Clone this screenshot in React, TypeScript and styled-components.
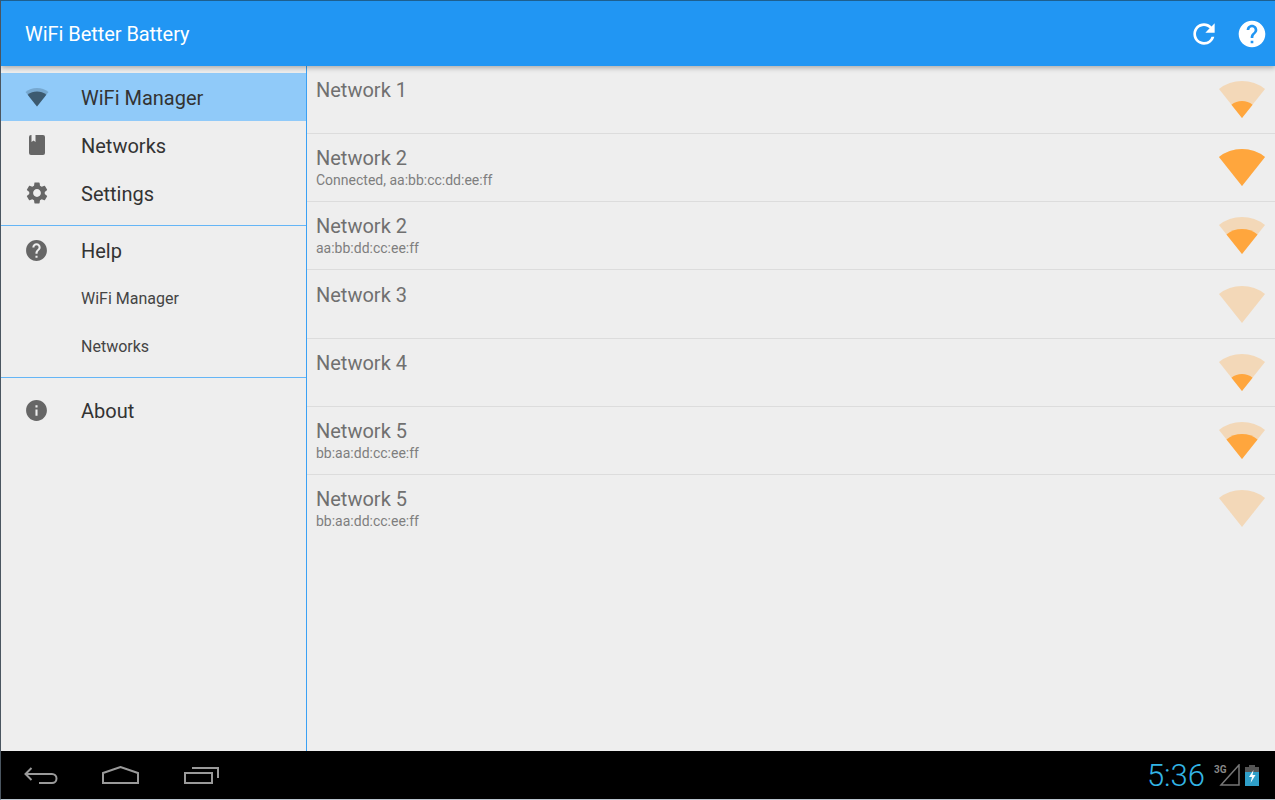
/**
 * WiFi Better Battery: tablet screen with drawer and network list
 */

import * as React from "react"
import styled, { createGlobalStyle } from "styled-components"
import { MdHelp, MdInfo, MdRefresh, MdSettings } from "react-icons/md"

const GlobalStyle = createGlobalStyle`
    html, body {
        margin: 0;
        padding: 0;
        background: #000;
    }
`

const Screen = styled.div`
    width: 1275px;
    height: 800px;
    display: flex;
    flex-direction: column;
    overflow: hidden;
    box-sizing: border-box;
    border-top: 1px solid #1d5f8f;
    border-left: 1px solid #4a5560;
    border-bottom: 1px solid #bcc6d0;
    font-family: Roboto, "Liberation Sans", sans-serif;
`

const AppBar = styled.header`
    height: 65px;
    flex: none;
    display: flex;
    align-items: center;
    justify-content: space-between;
    padding: 0 3px 0 24px;
    background: #2196f3;
    color: #fff;
    position: relative;
    z-index: 1;
    box-shadow: 0 2px 5px rgba(0, 0, 0, 0.28);
`

const AppTitle = styled.div`
    font-size: 20px;
    font-weight: 400;
    letter-spacing: -0.05px;
    padding-top: 1px;
`

const AppActions = styled.div`
    display: flex;
    align-items: center;
    gap: 8px;
`

const ActionIcon = styled.span`
    display: flex;
    width: 40px;
    height: 40px;
    align-items: center;
    justify-content: center;
`

const Body = styled.div`
    flex: 1;
    min-height: 0;
    display: flex;
    background: #eeeeee;
`

const Drawer = styled.nav`
    width: 305px;
    flex: none;
    border-right: 1px solid #3aa0f4;
    padding-top: 7px;
    color: #333;
`

const DrawerGroup = styled.div<{ $top?: number; $bottom?: number; $divider?: boolean }>`
    padding-top: ${(p) => p.$top ?? 0}px;
    padding-bottom: ${(p) => p.$bottom ?? 0}px;
    border-top: ${(p) => (p.$divider ? "1px solid #64b5f6" : "0")};
`

const DrawerItem = styled.div<{ $active?: boolean }>`
    height: 48px;
    display: flex;
    align-items: center;
    background: ${(p) => (p.$active ? "#90caf9" : "transparent")};
`

const DrawerLabel = styled.span`
    font-size: 20px;
    padding-top: 2px;
`

const DrawerSubLabel = styled.span`
    font-size: 16px;
    padding-left: 80px;
    color: #444;
`

const DrawerIcon = styled.span`
    width: 80px;
    flex: none;
    display: flex;
    justify-content: center;
    padding-right: 9px;
    box-sizing: border-box;
    color: #666;
`

const NetworkList = styled.main`
    flex: 1;
    min-width: 0;
`

const NetworkRow = styled.div`
    height: 68.15px;
    box-sizing: border-box;
    display: flex;
    justify-content: space-between;
    padding: 12.15px 9px 0 9px;
    border-bottom: 1px solid #dcdcdc;
    &:last-child {
        border-bottom: 0;
    }
`

const NetworkText = styled.div`
    display: flex;
    flex-direction: column;
    color: #707070;
`

const NetworkName = styled.div`
    font-size: 20px;
    line-height: 25px;
`

const NetworkDetail = styled.div`
    font-size: 14px;
    line-height: 18px;
    color: #7e7e7e;
`

const SignalSlot = styled.div`
    padding-top: 3px;
`

const NavBar = styled.footer`
    height: 48px;
    flex: none;
    display: flex;
    align-items: center;
    justify-content: space-between;
    padding: 0 16px 0 23px;
    background: #000;
`

const NavButtons = styled.div`
    display: flex;
    align-items: center;
    gap: 44px;
`

const Tray = styled.div`
    display: flex;
    align-items: center;
`

const Clock = styled.div`
    font-size: 31px;
    font-weight: 300;
    color: #33b5e5;
    margin-right: 9px;
`

const SignalTray = styled.div`
    position: relative;
    width: 26px;
    height: 22px;
    margin-right: 5px;
`

const ThreeG = styled.span`
    position: absolute;
    left: 0;
    top: 1px;
    font-size: 10px;
    line-height: 10px;
    font-weight: 700;
    color: #888;
`

/** Fan shaped signal meter, the filled part grows out of the tip */
function SignalFan(props: { size: number; level: number; color: string; faint: number }) {
    const sector = (r: number) => {
        const dx = r * 0.622
        const dy = r * 0.783
        return `M24 37 L${24 - dx} ${37 - dy} A${r} ${r} 0 0 1 ${24 + dx} ${37 - dy} Z`
    }
    return (
        <svg width={props.size} height={(props.size * 38) / 48} viewBox="0 0 48 38">
            <path d={sector(37)} fill={props.color} opacity={props.faint} />
            {props.level > 0 && <path d={sector(props.level)} fill={props.color} />}
        </svg>
    )
}

function BookIcon() {
    return (
        <svg width="16" height="20" viewBox="0 0 16 20">
            <path
                fill="currentColor"
                fillRule="evenodd"
                d="M2 0H14a2 2 0 0 1 2 2V18a2 2 0 0 1-2 2H2a2 2 0 0 1-2-2V2a2 2 0 0 1 2-2ZM2.5 0V7L4.5 5.5L6.5 7V0Z"
            />
        </svg>
    )
}

function BackIcon() {
    return (
        <svg width="34" height="18" viewBox="0 0 34 18" fill="none" stroke="#9a9a9a" strokeWidth="2">
            <path d="M7.5 2L1.5 8L7.5 14" />
            <path d="M1.5 8H28A4.5 4.5 0 0 1 28 17H15" />
        </svg>
    )
}

function HomeIcon() {
    return (
        <svg width="38" height="18" viewBox="0 0 38 18" fill="none" stroke="#9a9a9a" strokeWidth="2">
            <path d="M1 17V7L18.5 1L36 7V17Z" />
        </svg>
    )
}

function RecentsIcon() {
    return (
        <svg width="35" height="17" viewBox="0 0 35 17" fill="none" stroke="#9a9a9a" strokeWidth="2">
            <path d="M1 6H28V16H1Z" />
            <path d="M8 1H34V11" />
        </svg>
    )
}

function BatteryIcon() {
    return (
        <svg width="14" height="21" viewBox="0 0 14 21">
            <path d="M4 0H10V2H14V21H0V2H4Z" fill="#555" />
            <path d="M0 7H14V21H0Z" fill="#2f9fc9" />
            <path d="M8.5 5L4 12H7L5.5 18L10.5 10H7.5Z" fill="#fff" />
        </svg>
    )
}

const networks = [
    { name: "Network 1", level: 17 },
    { name: "Network 2", detail: "Connected, aa:bb:cc:dd:ee:ff", level: 37 },
    { name: "Network 2", detail: "aa:bb:dd:cc:ee:ff", level: 25 },
    { name: "Network 3", level: 0 },
    { name: "Network 4", level: 17 },
    { name: "Network 5", detail: "bb:aa:dd:cc:ee:ff", level: 25 },
    { name: "Network 5", detail: "bb:aa:dd:cc:ee:ff", level: 0 },
]

export default function App() {
    return (
        <Screen>
            <GlobalStyle />
            <AppBar>
                <AppTitle>WiFi Better Battery</AppTitle>
                <AppActions>
                    <ActionIcon>
                        <MdRefresh size={32} />
                    </ActionIcon>
                    <ActionIcon>
                        <MdHelp size={32} />
                    </ActionIcon>
                </AppActions>
            </AppBar>
            <Body>
                <Drawer>
                    <DrawerGroup $bottom={8}>
                        <DrawerItem $active>
                            <DrawerIcon>
                                <SignalFan size={24} level={30} color="#3c5a70" faint={0.3} />
                            </DrawerIcon>
                            <DrawerLabel>WiFi Manager</DrawerLabel>
                        </DrawerItem>
                        <DrawerItem>
                            <DrawerIcon>
                                <BookIcon />
                            </DrawerIcon>
                            <DrawerLabel>Networks</DrawerLabel>
                        </DrawerItem>
                        <DrawerItem>
                            <DrawerIcon>
                                <MdSettings size={26} />
                            </DrawerIcon>
                            <DrawerLabel>Settings</DrawerLabel>
                        </DrawerItem>
                    </DrawerGroup>
                    <DrawerGroup $divider $bottom={7}>
                        <DrawerItem>
                            <DrawerIcon>
                                <MdHelp size={25} />
                            </DrawerIcon>
                            <DrawerLabel>Help</DrawerLabel>
                        </DrawerItem>
                        <DrawerItem>
                            <DrawerSubLabel>WiFi Manager</DrawerSubLabel>
                        </DrawerItem>
                        <DrawerItem>
                            <DrawerSubLabel>Networks</DrawerSubLabel>
                        </DrawerItem>
                    </DrawerGroup>
                    <DrawerGroup $divider $top={8}>
                        <DrawerItem>
                            <DrawerIcon>
                                <MdInfo size={25} />
                            </DrawerIcon>
                            <DrawerLabel>About</DrawerLabel>
                        </DrawerItem>
                    </DrawerGroup>
                </Drawer>
                <NetworkList>
                    {networks.map((n, i) => (
                        <NetworkRow key={i}>
                            <NetworkText>
                                <NetworkName>{n.name}</NetworkName>
                                {n.detail && <NetworkDetail>{n.detail}</NetworkDetail>}
                            </NetworkText>
                            <SignalSlot>
                                <SignalFan size={48} level={n.level} color="#ffa63d" faint={0.3} />
                            </SignalSlot>
                        </NetworkRow>
                    ))}
                </NetworkList>
            </Body>
            <NavBar>
                <NavButtons>
                    <BackIcon />
                    <HomeIcon />
                    <RecentsIcon />
                </NavButtons>
                <Tray>
                    <Clock>5:36</Clock>
                    <SignalTray>
                        <ThreeG>3G</ThreeG>
                        <svg width="26" height="22" viewBox="0 0 26 22" fill="none" stroke="#777" strokeWidth="1.5">
                            <path d="M25 1V21H7Z" />
                        </svg>
                    </SignalTray>
                    <BatteryIcon />
                </Tray>
            </NavBar>
        </Screen>
    )
}
